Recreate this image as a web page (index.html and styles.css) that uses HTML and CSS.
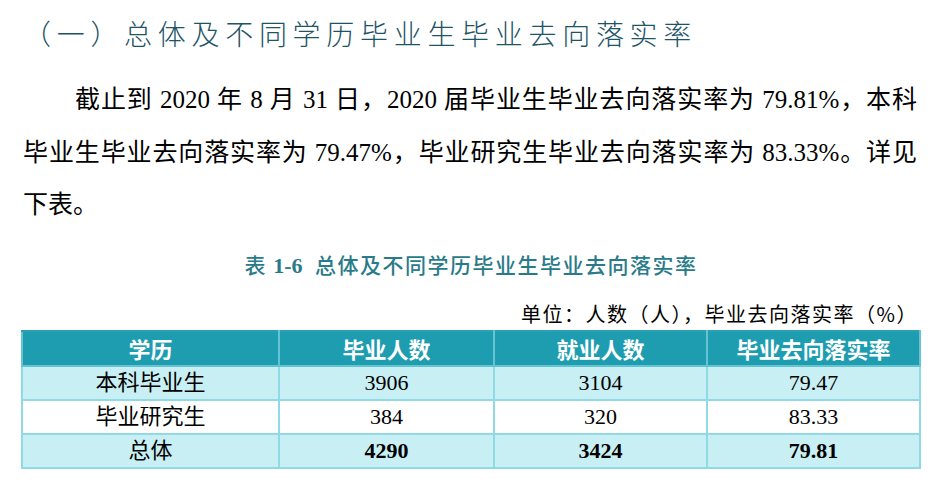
FILE: index.html
```html
<!DOCTYPE html>
<html lang="zh-CN">
<head>
<meta charset="utf-8">
<title>总体及不同学历毕业生毕业去向落实率</title>
<link rel="stylesheet" href="styles.css">
</head>
<body>
<div class="page">
  <h2 class="section-title">（一）总体及不同学历毕业生毕业去向落实率</h2>
  <p class="para">
    <span class="line first just">截止到 2020 年 8 月 31 日，2020 届毕业生毕业去向落实率为 79.81%，本科</span>
    <span class="line just">毕业生毕业去向落实率为 79.47%，毕业研究生毕业去向落实率为 83.33%。详见</span>
    <span class="line">下表。</span>
  </p>
  <div class="caption">表 <b class="cap-num">1-6</b>&nbsp; 总体及不同学历毕业生毕业去向落实率</div>
  <div class="unit">单位：人数（人），毕业去向落实率（%）</div>
  <table class="data">
    <colgroup>
      <col class="c1"><col class="c2"><col class="c3"><col class="c4">
    </colgroup>
    <thead>
      <tr><th>学历</th><th>毕业人数</th><th>就业人数</th><th>毕业去向落实率</th></tr>
    </thead>
    <tbody>
      <tr class="alt"><td>本科毕业生</td><td>3906</td><td>3104</td><td>79.47</td></tr>
      <tr><td>毕业研究生</td><td>384</td><td>320</td><td>83.33</td></tr>
      <tr class="alt total"><td class="label">总体</td><td>4290</td><td>3424</td><td>79.81</td></tr>
    </tbody>
  </table>
</div>
</body>
</html>
```
FILE: styles.css
```css
html, body {
  margin: 0;
  padding: 0;
  background: #ffffff;
}

.page {
  width: 898px;
  padding: 13px 0 0 21px;
  font-family: "Liberation Serif", "Noto Sans CJK SC", serif;
  color: #000;
}

.section-title {
  margin: 0 0 21px 2px;
  font-family: "Noto Sans CJK SC", sans-serif;
  font-weight: 300;
  font-size: 28px;
  line-height: 40px;
  letter-spacing: 5.7px;
  color: #1d5466;
}

.para {
  margin: 0 0 17px 2px;
  width: 894px;
  font-size: 25px;
  line-height: 52.5px;
}

.line {
  display: block;
  white-space: nowrap;
}

.line.just {
  text-align: justify;
  text-align-last: justify;
  white-space: normal;
}

.line.first {
  text-indent: 52px;
}

.caption {
  text-align: center;
  font-family: "Noto Sans CJK SC", sans-serif;
  font-weight: 500;
  font-size: 21px;
  line-height: 30px;
  letter-spacing: 1.5px;
  color: #2a7b89;
  padding-left: 2px;
}

.cap-num {
  font-family: "Liberation Serif", serif;
  font-weight: 700;
  font-size: 22px;
  letter-spacing: 0;
}

.unit {
  margin-top: 19px;
  text-align: right;
  padding-right: 1px;
  font-family: "Noto Sans CJK SC", sans-serif;
  font-size: 20px;
  line-height: 28px;
  letter-spacing: 1.5px;
  margin-bottom: 2px;
}

.data {
  width: 898px;
  border-collapse: collapse;
  table-layout: fixed;
  font-size: 22px;
}

.c1 { width: 257px; }
.c2 { width: 215px; }
.c3 { width: 213px; }
.c4 { width: 213px; }

.data th {
  height: 33px;
  padding: 0;
  background: #1f9db0;
  color: #fff;
  font-family: "Noto Sans CJK SC", sans-serif;
  font-weight: 700;
  font-size: 22px;
  line-height: 30px;
  border: 2px solid #66c3d2;
  border-top-color: #2aa0b2;
}

.data td {
  height: 32px;
  padding: 0;
  text-align: center;
  border: 2px solid #8fdae6;
  font-family: "Liberation Serif", "Noto Sans CJK SC", serif;
  line-height: 30px;
  background: #fff;
}

.data tr.alt td {
  background: #c8eff4;
}

.data tr.total td {
  font-weight: 700;
}

.data tr.total td.label {
  font-weight: 400;
}
```
